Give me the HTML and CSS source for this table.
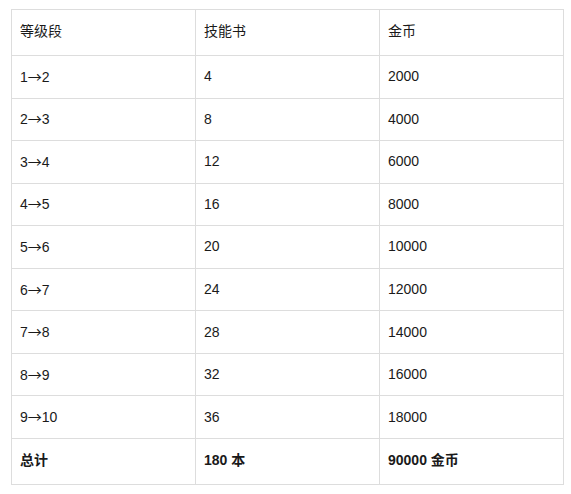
FILE: index.html
```html
<!DOCTYPE html>
<html lang="zh">
<head>
<meta charset="utf-8">
<link rel="stylesheet" href="styles.css">
</head>
<body>
<table class="grid">
  <thead>
    <tr class="row-tall"><th>等级段</th><th>技能书</th><th>金币</th></tr>
  </thead>
  <tbody>
    <tr><td>1<span class="arr">→</span>2</td><td>4</td><td>2000</td></tr>
    <tr><td>2<span class="arr">→</span>3</td><td>8</td><td>4000</td></tr>
    <tr><td>3<span class="arr">→</span>4</td><td>12</td><td>6000</td></tr>
    <tr><td>4<span class="arr">→</span>5</td><td>16</td><td>8000</td></tr>
    <tr><td>5<span class="arr">→</span>6</td><td>20</td><td>10000</td></tr>
    <tr><td>6<span class="arr">→</span>7</td><td>24</td><td>12000</td></tr>
    <tr><td>7<span class="arr">→</span>8</td><td>28</td><td>14000</td></tr>
    <tr><td>8<span class="arr">→</span>9</td><td>32</td><td>16000</td></tr>
    <tr><td>9<span class="arr">→</span>10</td><td>36</td><td>18000</td></tr>
    <tr class="row-tall total"><td>总计</td><td><b>180 本</b></td><td><b>90000 金币</b></td></tr>
  </tbody>
</table>
</body>
</html>
```
FILE: styles.css
```css
html, body {
  margin: 0;
  padding: 0;
  background: #ffffff;
}
body {
  font-family: "Liberation Sans", Arial, "Noto Sans CJK SC", sans-serif;
  font-size: 14px;
  color: #1a1a1a;
}
.grid {
  border-collapse: collapse;
  width: 553px;
  margin: 9px 0 0 11px;
  table-layout: fixed;
}
.grid th,
.grid td {
  border: 1px solid #dddddd;
  padding: 0 8px 1px 8px;
  height: 40.56px;
  line-height: 16px;
  text-align: left;
  vertical-align: middle;
  font-weight: normal;
}
.grid tr.row-tall th,
.grid tr.row-tall td {
  padding-bottom: 3px;
  height: 42px;
}
.arr {
  font-family: "Noto Sans CJK SC", sans-serif;
  line-height: 16px;
}
.grid .total td:first-child {
  font-weight: bold;
}
.grid b {
  font-weight: bold;
}
```
